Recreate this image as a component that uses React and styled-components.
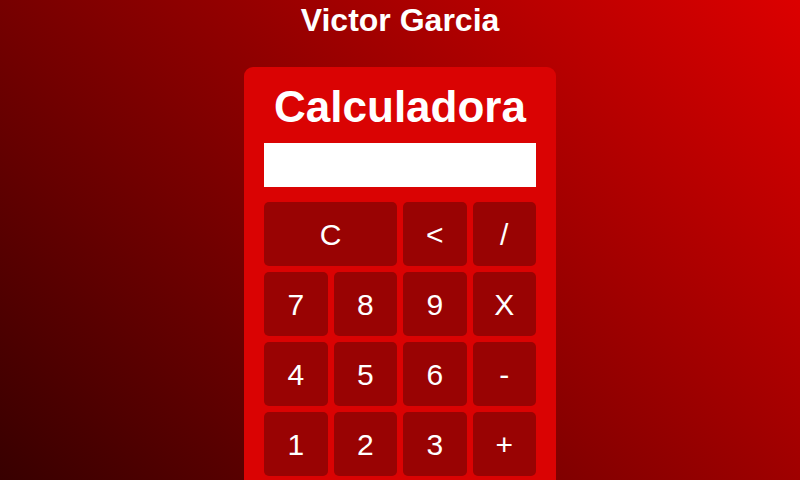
import React from "react";
import styled, { createGlobalStyle } from "styled-components";

const GlobalStyle = createGlobalStyle`
  * { box-sizing: border-box; }
  html, body {
    margin: 0;
    padding: 0;
    min-height: 100%;
  }
  body {
    font-family: "Liberation Sans", Arial, sans-serif;
    background: linear-gradient(45deg, #360000 0%, #8a0000 50%, #dc0000 100%);
    min-height: 100vh;
  }
`;

const Page = styled.div`
  min-height: 100vh;
  display: flex;
  flex-direction: column;
  align-items: center;
  padding-top: 2px;
`;

const Name = styled.h1`
  margin: 0;
  font-size: 32px;
  line-height: 36px;
  font-weight: 700;
  color: #ffffff;
  text-align: center;
`;

const Card = styled.div`
  margin-top: 29px;
  width: 312px;
  background: #da0303;
  border-radius: 9px;
  padding: 14px 20px 20px;
  display: flex;
  flex-direction: column;
`;

const Title = styled.h2`
  margin: 0;
  font-size: 44px;
  line-height: 52px;
  font-weight: 700;
  color: #ffffff;
  text-align: center;
`;

const Display = styled.input`
  margin-top: 10px;
  height: 44px;
  width: 100%;
  border: none;
  outline: none;
  background: #ffffff;
  font-family: inherit;
  font-size: 24px;
  padding: 0 10px;
  text-align: right;
`;

const Keys = styled.div`
  margin-top: 15px;
  display: grid;
  grid-template-columns: repeat(4, 1fr);
  gap: 6px;
`;

const Key = styled.button`
  grid-column: span ${(p) => p.$span || 1};
  height: 64px;
  border: none;
  border-radius: 5px;
  background: #990303;
  color: #ffffff;
  font-family: "Liberation Sans", Arial, sans-serif;
  font-size: 30px;
  padding: 2px 0 0;
  cursor: pointer;
  display: flex;
  align-items: center;
  justify-content: center;
`;

const keys = [
  { l: "C", span: 2 },
  { l: "<" },
  { l: "/" },
  { l: "7" },
  { l: "8" },
  { l: "9" },
  { l: "X" },
  { l: "4" },
  { l: "5" },
  { l: "6" },
  { l: "-" },
  { l: "1" },
  { l: "2" },
  { l: "3" },
  { l: "+" },
];

export default function App() {
  return (
    <>
      <GlobalStyle />
      <Page>
        <Name>Victor Garcia</Name>
        <Card>
          <Title>Calculadora</Title>
          <Display type="text" readOnly value="" />
          <Keys>
            {keys.map((k, i) => (
              <Key key={i} $span={k.span}>
                {k.l}
              </Key>
            ))}
          </Keys>
        </Card>
      </Page>
    </>
  );
}
